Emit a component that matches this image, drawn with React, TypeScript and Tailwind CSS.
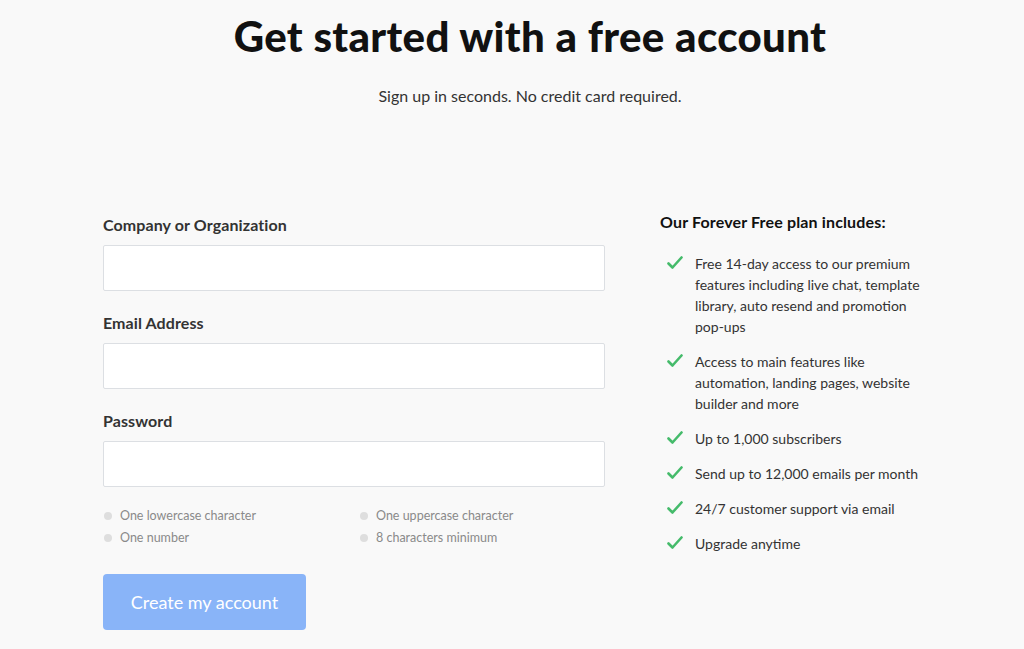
const features = [
  'Free 14-day access to our premium features including live chat, template library, auto resend and promotion pop-ups',
  'Access to main features like automation, landing pages, website builder and more',
  'Up to 1,000 subscribers',
  'Send up to 12,000 emails per month',
  '24/7 customer support via email',
  'Upgrade anytime',
]

const rules = ['One lowercase character', 'One uppercase character', 'One number', '8 characters minimum']

function CheckMark() {
  return (
    <svg viewBox="0 0 16 14" className="w-[16px] h-[14px] mt-[3px] ml-[7px] mr-[12px] shrink-0">
      <polyline
        points="1.5,7.5 5.5,11.5 14.5,1.5"
        fill="none"
        stroke="#45bb6b"
        strokeWidth="2.6"
        strokeLinecap="round"
        strokeLinejoin="round"
      />
    </svg>
  )
}

function Field({ label, type = 'text' }: { label: string; type?: string }) {
  return (
    <div className="flex flex-col">
      <label className="text-[16px] font-bold text-[#333] leading-[20px] mb-[10px] tracking-[0.1px]">{label}</label>
      <input
        type={type}
        className="h-[46px] w-[502px] bg-white border border-[#dcdfe3] rounded-[2px] outline-none px-3"
      />
    </div>
  )
}

export default function App() {
  return (
    <div className="min-h-[649px] w-full bg-[#f9f9f9] font-['Lato',sans-serif] text-[#333]">
      {/* Header */}
      <div className="pl-[36px] flex flex-col items-center pt-[11px]">
        <h1 className="text-[42px] font-black text-[#111] leading-[50px] tracking-[0.35px]">
          Get started with a free account
        </h1>
        <p className="mt-[24px] text-[16px] text-[#333] leading-[22px]">
          Sign up in seconds. No credit card required.
        </p>
      </div>

      {/* Body */}
      <div className="flex pl-[103px] pt-[108px]">
        {/* Form */}
        <div className="flex flex-col w-[502px]">
          <div className="flex flex-col gap-[22px]">
            <Field label="Company or Organization" />
            <Field label="Email Address" type="email" />
            <Field label="Password" type="password" />
          </div>

          <div className="grid grid-cols-[256px_1fr] gap-y-[6px] mt-[21px] pl-[1px]">
            {rules.map((r) => (
              <div key={r} className="flex items-center gap-[8px] text-[12.5px] leading-[16px] text-[#8a8a8a]">
                <span className="w-[8px] h-[8px] rounded-full bg-[#dedede]" />
                {r}
              </div>
            ))}
          </div>

          <button className="mt-[28px] w-[203px] h-[56px] rounded-[4px] bg-[#89b4f8] text-white text-[18px] leading-none">
            Create my account
          </button>
        </div>

        {/* Plan */}
        <div className="ml-[55px] w-[280px] -mt-[3px]">
          <h2 className="text-[16px] font-bold text-[#111] leading-[20px] tracking-[0.15px]">
            Our Forever Free plan includes:
          </h2>
          <ul className="mt-[21px] flex flex-col gap-[14px]">
            {features.map((f) => (
              <li key={f} className="flex items-start text-[14px] leading-[21px] text-[#333]">
                <CheckMark />
                <span className="w-[230px]">{f}</span>
              </li>
            ))}
          </ul>
        </div>
      </div>
    </div>
  )
}
